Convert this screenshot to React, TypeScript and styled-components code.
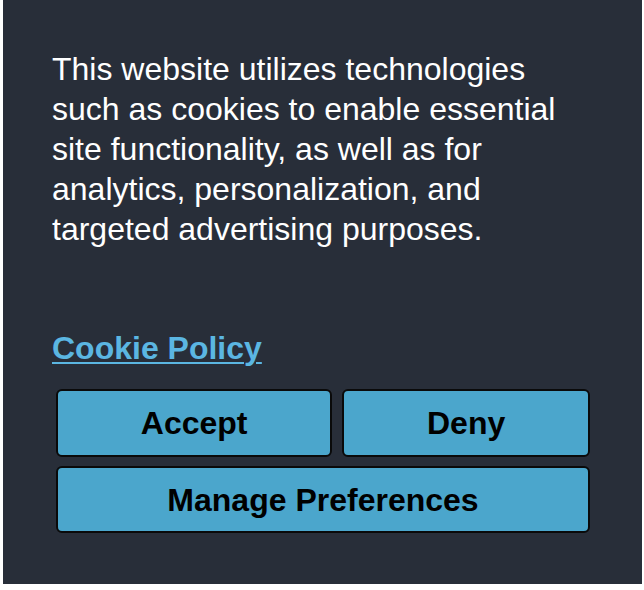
import React from "react";
import styled, { createGlobalStyle } from "styled-components";

const Global = createGlobalStyle`
  html, body { margin: 0; padding: 0; background: #ffffff; }
  body { font-family: "Liberation Sans", Arial, sans-serif; }
  * { box-sizing: border-box; }
`;

const Page = styled.div`
  width: 644px;
  height: 590px;
  overflow: hidden;
  padding-left: 3px;
`;

const Banner = styled.section`
  width: 639px;
  background: #282e39;
  padding: 49px 48px 51px 49px;
  color: #ffffff;
`;

const Message = styled.p`
  margin: 0;
  font-size: 32px;
  line-height: 40px;
  font-weight: 400;
  color: #ffffff;
`;

const PolicyLink = styled.a`
  display: block;
  margin-top: 79px;
  font-size: 32px;
  line-height: 40px;
  font-weight: 700;
  color: #5bb6e2;
  text-decoration: underline;
  text-decoration-thickness: 2px;
  text-underline-offset: 3px;
  width: fit-content;
`;

const Actions = styled.div`
  margin-top: 21px;
  padding: 0 4px;
  display: flex;
  flex-direction: column;
  gap: 9px;
`;

const Row = styled.div`
  display: flex;
  gap: 10px;
`;

const Button = styled.button<{ $tall?: boolean }>`
  flex: 1 1 auto;
  height: ${(p) => (p.$tall ? "68px" : "67px")};
  background: #4ba6cc;
  border: 2px solid #0a0a0a;
  border-radius: 6px;
  color: #000000;
  font-family: "Liberation Sans", Arial, sans-serif;
  font-size: 32px;
  font-weight: 700;
  line-height: 40px;
  padding: 0 12px;
  cursor: pointer;
`;

export default function App() {
  return (
    <>
      <Global />
      <Page>
        <Banner>
          <Message>
            This website utilizes technologies such as cookies to enable
            essential site functionality, as well as for analytics,
            personalization, and targeted advertising purposes.
          </Message>
          <PolicyLink href="#">Cookie Policy</PolicyLink>
          <Actions>
            <Row>
              <Button $tall>Accept</Button>
              <Button $tall>Deny</Button>
            </Row>
            <Row>
              <Button>Manage Preferences</Button>
            </Row>
          </Actions>
        </Banner>
      </Page>
    </>
  );
}
